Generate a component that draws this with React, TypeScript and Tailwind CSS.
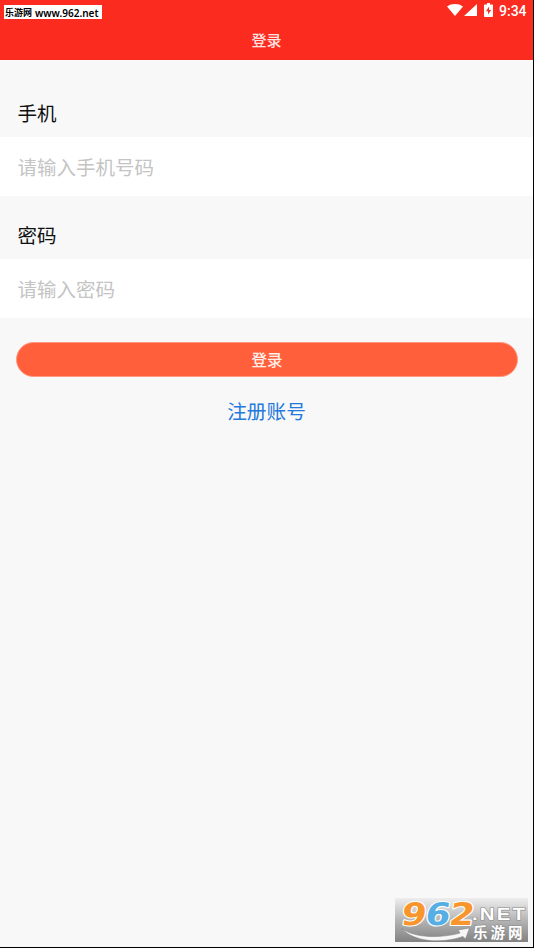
import { useState } from "react"

interface FieldProps {
  label: string
  placeholder: string
  type: string
  value: string
  onChange: (value: string) => void
}

function StatusBar() {
  return (
    <div className="flex h-5 items-center justify-end pr-1.5 text-white">
      <svg width="16" height="12" viewBox="0 0 16 12" fill="currentColor">
        <path d="M0 2.6C2.2.8 5 0 8 0s5.8.8 8 2.6L8 12z" />
      </svg>
      <svg className="ml-px" width="13" height="12" viewBox="0 0 13 12" fill="currentColor">
        <path d="M13 0v12H0z" />
      </svg>
      <svg className="ml-[7px]" width="9" height="14" viewBox="0 0 9 14">
        <path fill="currentColor" d="M3 0h3v1.4h2.2c.5 0 .8.3.8.8v11c0 .5-.3.8-.8.8H.8c-.5 0-.8-.3-.8-.8v-11c0-.5.3-.8.8-.8H3z" />
        <path fill="#fb2b20" d="M5.1 3.6 2 8.2h2v3.4L7.1 7h-2z" />
      </svg>
      <span className="ml-1.5 w-7 pt-px whitespace-nowrap font-[Roboto,sans-serif] text-sm leading-5 font-medium">
        9:34
      </span>
    </div>
  )
}

function Field({ label, placeholder, type, value, onChange }: FieldProps) {
  return (
    <label className="block">
      <span className="flex h-12 items-center pl-[17.5px] text-[19.5px] text-[#111111]">{label}</span>
      <input
        className="block h-[59px] w-full bg-white px-[17.5px] text-[19.5px] text-[#111111] outline-none placeholder:text-[#c4c4c4]"
        type={type}
        placeholder={placeholder}
        value={value}
        onChange={(e) => onChange(e.target.value)}
      />
    </label>
  )
}

function SiteLogo() {
  return (
    <svg className="absolute right-[5px] bottom-[5px]" width="133" height="44" viewBox="0 0 133 44">
      <defs>
        <linearGradient id="plate" x1="0" y1="0" x2="0" y2="1">
          <stop offset="0" stopColor="#eeeeee" />
          <stop offset="0.5" stopColor="#b5b5b5" />
          <stop offset="1" stopColor="#828282" />
        </linearGradient>
      </defs>
      <rect width="133" height="44" fill="url(#plate)" />
      <path
        d="M6.500 30.500C20 40 45 40.500 65 35l-2-3 11.500-2-4 11-2.500-2.500C46 46 19 44 6.500 30.500z"
        fill="#f7f7f7"
        stroke="#858585"
        strokeWidth="0.6"
      />
      <g
        fontFamily="'DejaVu Sans', sans-serif"
        fontWeight="700"
        fontSize="31"
        stroke="#fff"
        strokeWidth="2.2"
        strokeLinejoin="round"
        paintOrder="stroke"
        transform="translate(5 27) skewX(-9)"
      >
        <text x="0" y="0" textLength="25" lengthAdjust="spacingAndGlyphs" fill="#f8962d">9</text>
        <text x="24" y="0" textLength="25" lengthAdjust="spacingAndGlyphs" fill="#56aee4">6</text>
        <text x="48" y="0" textLength="25" lengthAdjust="spacingAndGlyphs" fill="#f8962d">2</text>
      </g>
      <g fill="#fff" stroke="#8c8c8c" strokeWidth="1.2" paintOrder="stroke" fontWeight="700">
        <text
          transform="translate(77 21.5) scale(1.2 1)"
          fontFamily="'Liberation Sans', sans-serif"
          fontSize="17"
          letterSpacing="1.8"
        >
          .NET
        </text>
        <text x="78" y="39.500" fontFamily="'Noto Sans CJK SC', sans-serif" fontSize="14.5" letterSpacing="3">乐游网</text>
      </g>
    </svg>
  )
}

export default function App() {
  const [phone, setPhone] = useState("")
  const [password, setPassword] = useState("")

  return (
    <div className="relative h-[948px] w-[534px] overflow-hidden border-r border-b border-black bg-[#f8f8f8] font-['Noto_Sans_CJK_SC',sans-serif]">
      <header className="h-[60px] bg-[#fb2b20]">
        <StatusBar />
        <h1 className="flex h-10 items-center justify-center text-[15px] font-medium text-[#ffe4e2]">登录</h1>
      </header>

      {/* Login form */}
      <form className="pt-[29px]" onSubmit={(e) => e.preventDefault()}>
        <div className="flex flex-col gap-[15px]">
          <Field label="手机" placeholder="请输入手机号码" type="tel" value={phone} onChange={setPhone} />
          <Field label="密码" placeholder="请输入密码" type="password" value={password} onChange={setPassword} />
        </div>
        <button
          type="submit"
          className="mx-4 mt-6 flex h-[35px] w-[502px] items-center justify-center rounded-full border border-[#ff9a80] bg-[#ff603b] text-[15.5px] font-medium text-[#fff0ec]"
        >
          登录
        </button>
        <a href="#register" className="mx-auto mt-5 block w-fit text-[19.7px] leading-7 text-[#2479dc]">
          注册账号
        </a>
      </form>

      {/* Site marks */}
      <div className="absolute top-[5px] left-1 flex h-3.5 w-[98px] items-center bg-white pl-px text-black">
        <span className="whitespace-nowrap text-[9px] leading-none font-bold">乐游网</span>
        <span className="ml-[3px] pt-px whitespace-nowrap font-['Noto_Sans',sans-serif] text-[10px] leading-none font-semibold">www.962.net</span>
      </div>
      <SiteLogo />
    </div>
  )
}
